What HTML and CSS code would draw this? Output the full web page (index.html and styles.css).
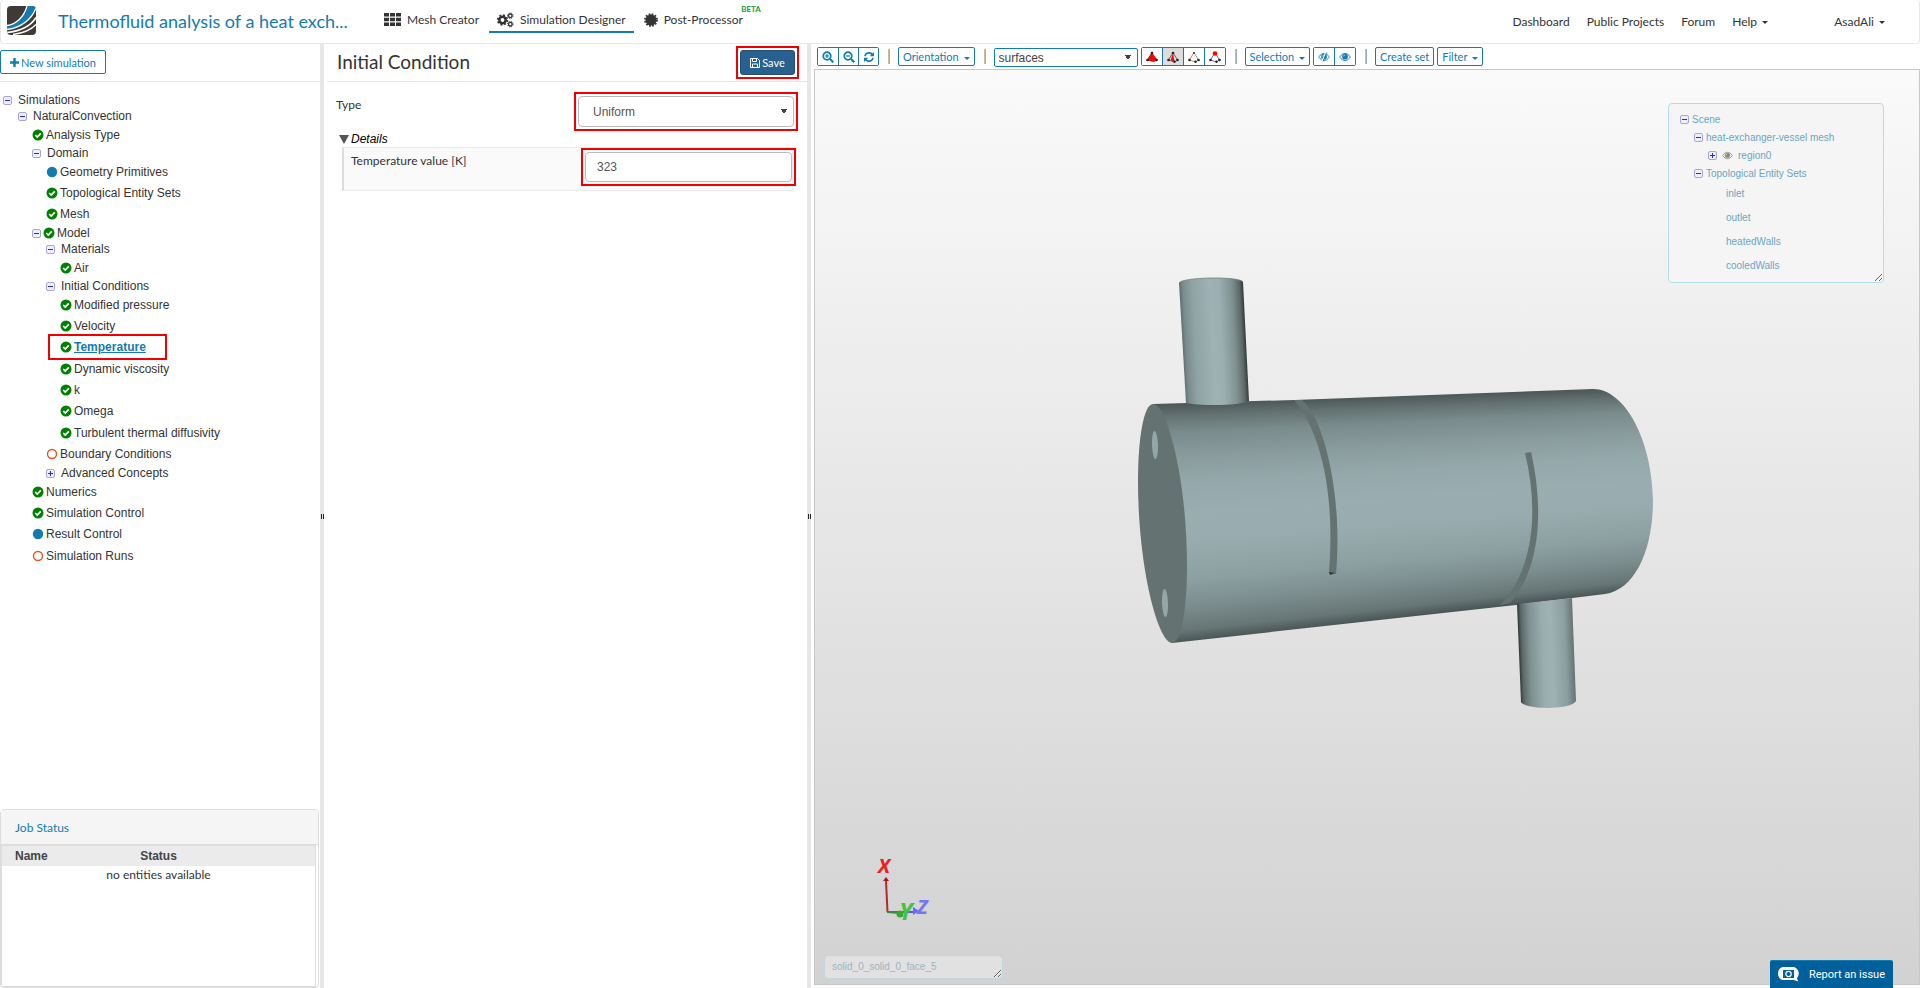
FILE: index.html
```html
<!DOCTYPE html>
<html lang="en">
<head>
    <meta charset="UTF-8">
    <meta name="viewport" content="width=device-width, initial-scale=1.0">
    <title>Simulation Designer</title>
    <link rel="stylesheet" href="styles.css">
</head>
<body>
    <!-- shared icons -->
    <svg class="defs" aria-hidden="true">
        <symbol id="i-ok" viewBox="0 0 12 12">
            <circle cx="6" cy="6" r="5.5" fill="#008000"/>
            <path d="M3.2 6l2 2 3.6-3.6" fill="none" stroke="#fff" stroke-width="1.7"/>
        </symbol>
        <symbol id="i-dot" viewBox="0 0 12 12"><circle cx="6" cy="6" r="5.2" fill="#147bb0"/></symbol>
        <symbol id="i-ring" viewBox="0 0 12 12"><circle cx="6" cy="6" r="4.5" fill="none" stroke="#d9552b" stroke-width="1.4"/></symbol>
        <symbol id="i-minus" viewBox="0 0 9 9">
            <rect x=".5" y=".5" width="8" height="8" rx="1.5" fill="#eef" stroke="#a3a8d8"/>
            <path d="M2 4.5h5" stroke="#2a2ad0"/>
        </symbol>
        <symbol id="i-plusbox" viewBox="0 0 9 9">
            <rect x=".5" y=".5" width="8" height="8" rx="1.5" fill="#eef" stroke="#a3a8d8"/>
            <path d="M2 4.5h5M4.5 2v5" stroke="#2a2ad0"/>
        </symbol>
        <symbol id="i-eye" viewBox="0 0 14 12">
            <path d="M.5 6C3 2.6 5 1.8 7 1.8S11 2.6 13.500 6C11 9.400 9 10.200 7 10.200S3 9.400.5 6z" fill="none" stroke="currentColor" stroke-width="1.1"/>
            <circle cx="7" cy="5.600" r="3.400" fill="currentColor"/>
            <path d="M5.300 5.200a1.700 1.700 0 0 1 1.500-1.500" fill="none" stroke="#fff" stroke-width=".8"/>
        </symbol>
    </svg>

    <header class="topbar">
        <a class="logo" href="#" aria-label="Home">
            <svg viewBox="0 0 29 29" width="29" height="29">
                <clipPath id="lc"><rect width="29" height="29" rx="4"/></clipPath>
                <g clip-path="url(#lc)">
                    <rect width="29" height="29" fill="#403a36"/>
                    <path d="M0 20C9 19 16 12 20 0H29V1C26 14 15 23 0 24z" fill="#147bb0"/>
                    <path d="M0 19.500C9 18.500 17 11 20 0" fill="none" stroke="#fff" stroke-width="1.300"/>
                    <path d="M0 23.500C14 22 25 13 29 2" fill="none" stroke="#fff" stroke-width="1.300"/>
                    <path d="M0 26.500C13 25.500 24 20 29 11.500" fill="none" stroke="#fff" stroke-width="1.600"/>
                    <path d="M6 28.500C17 27 25 23 29 18.500" fill="none" stroke="#fff" stroke-width="1.300"/>
                </g>
            </svg>
        </a>
        <a class="project" href="#">Thermofluid analysis of a heat exch...</a>
        <nav class="modes">
            <a class="mode" href="#">
                <svg viewBox="0 0 17 13" width="17" height="13"><path d="M0 0h5v3.500H0zM6 0h5v3.500H6zM12 0h5v3.500h-5zM0 4.700h5v3.500H0zM6 4.700h5v3.500H6zM12 4.700h5v3.500h-5zM0 9.400h5v3.500H0zM6 9.400h5v3.500H6zM12 9.400h5v3.500h-5z" fill="currentColor"/></svg>
                Mesh Creator
            </a>
            <a class="mode mode-active" href="#">
                <svg viewBox="0 0 17 16" width="17" height="16" fill="none" stroke="currentColor">
                    <circle cx="5.500" cy="8" r="3.200" stroke-width="2.600"/>
                    <circle cx="5.500" cy="8" r="4.900" stroke-width="1.600" stroke-dasharray="1.920 1.930"/>
                    <circle cx="13.300" cy="3.800" r="1.800" stroke-width="1.300"/>
                    <circle cx="13.300" cy="3.800" r="2.800" stroke-width="1" stroke-dasharray="1.100 1.100"/>
                    <circle cx="13.300" cy="12.200" r="1.800" stroke-width="1.300"/>
                    <circle cx="13.300" cy="12.200" r="2.800" stroke-width="1" stroke-dasharray="1.100 1.100"/>
                </svg>
                Simulation Designer
            </a>
            <a class="mode" href="#">
                <svg viewBox="0 0 14 14" width="14" height="14">
                    <circle cx="7" cy="7" r="5.500" fill="currentColor"/>
                    <circle cx="7" cy="7" r="6" fill="none" stroke="currentColor" stroke-width="1.800" stroke-dasharray="1.700 1.440"/>
                </svg>
                Post-Processor
                <span class="beta">BETA</span>
            </a>
        </nav>
        <nav class="links">
            <a href="#">Dashboard</a>
            <a href="#">Public Projects</a>
            <a href="#">Forum</a>
            <a href="#">Help <i class="caret"></i></a>
            <a class="user" href="#">AsadAli <i class="caret"></i></a>
        </nav>
    </header>

    <main class="workspace">
        <aside class="sidebar">
            <div class="sidebar-head">
                <button class="btn new-sim" type="button">
                    <svg viewBox="0 0 9 9" width="9" height="9"><path d="M4.500 0v9M0 4.500h9" stroke="currentColor" stroke-width="2.400"/></svg>
                    New simulation
                </button>
            </div>

            <ul class="tree sim-tree">
                <li><div class="folder"><svg class="tg"><use href="#i-minus"/></svg><span>Simulations</span></div>
                    <ul>
                        <li><div class="folder"><svg class="tg"><use href="#i-minus"/></svg><span>NaturalConvection</span></div>
                            <ul>
                                <li class="leaf"><svg class="st"><use href="#i-ok"/></svg>Analysis Type</li>
                                <li><div class="folder"><svg class="tg"><use href="#i-minus"/></svg><span>Domain</span></div>
                                    <ul>
                                        <li class="leaf"><svg class="st"><use href="#i-dot"/></svg>Geometry Primitives</li>
                                        <li class="leaf"><svg class="st"><use href="#i-ok"/></svg>Topological Entity Sets</li>
                                        <li class="leaf"><svg class="st"><use href="#i-ok"/></svg>Mesh</li>
                                    </ul>
                                </li>
                                <li><div class="folder folder-state"><svg class="tg"><use href="#i-minus"/></svg><svg class="st"><use href="#i-ok"/></svg>Model</div>
                                    <ul>
                                        <li><div class="folder"><svg class="tg"><use href="#i-minus"/></svg><span>Materials</span></div>
                                            <ul>
                                                <li class="leaf"><svg class="st"><use href="#i-ok"/></svg>Air</li>
                                            </ul>
                                        </li>
                                        <li><div class="folder"><svg class="tg"><use href="#i-minus"/></svg><span>Initial Conditions</span></div>
                                            <ul>
                                                <li class="leaf"><svg class="st"><use href="#i-ok"/></svg>Modified pressure</li>
                                                <li class="leaf"><svg class="st"><use href="#i-ok"/></svg>Velocity</li>
                                                <li class="leaf marked"><svg class="st"><use href="#i-ok"/></svg><a class="selected" href="#">Temperature</a></li>
                                                <li class="leaf"><svg class="st"><use href="#i-ok"/></svg>Dynamic viscosity</li>
                                                <li class="leaf"><svg class="st"><use href="#i-ok"/></svg>k</li>
                                                <li class="leaf"><svg class="st"><use href="#i-ok"/></svg>Omega</li>
                                                <li class="leaf"><svg class="st"><use href="#i-ok"/></svg>Turbulent thermal diffusivity</li>
                                            </ul>
                                        </li>
                                        <li class="leaf"><svg class="st"><use href="#i-ring"/></svg>Boundary Conditions</li>
                                        <li><div class="folder"><svg class="tg"><use href="#i-plusbox"/></svg><span>Advanced Concepts</span></div></li>
                                    </ul>
                                </li>
                                <li class="leaf"><svg class="st"><use href="#i-ok"/></svg>Numerics</li>
                                <li class="leaf"><svg class="st"><use href="#i-ok"/></svg>Simulation Control</li>
                                <li class="leaf"><svg class="st"><use href="#i-dot"/></svg>Result Control</li>
                                <li class="leaf"><svg class="st"><use href="#i-ring"/></svg>Simulation Runs</li>
                            </ul>
                        </li>
                    </ul>
                </li>
            </ul>

            <section class="jobs">
                <h2>Job Status</h2>
                <div class="jobs-body">
                    <table>
                        <thead><tr><th>Name</th><th class="mid">Status</th><th></th></tr></thead>
                        <tbody><tr><td colspan="3">no entities available</td></tr></tbody>
                    </table>
                </div>
            </section>
        </aside>

        <div class="splitter"><i></i></div>

        <section class="editor">
            <div class="editor-head">
                <h1>Initial Condition</h1>
                <button class="save" type="button">
                    <svg viewBox="0 0 10 10" width="10" height="10" fill="none" stroke="currentColor"><path d="M.5.5h7l2 2v7h-9zM2.500.5v3h4v-3M2.500 9.500v-3.500h5v3.500"/></svg>
                    Save
                </button>
            </div>
            <div class="row">
                <label for="type">Type</label>
                <div class="field marked">
                    <select id="type"><option>Uniform</option></select>
                </div>
            </div>
            <div class="details"><i class="tri"></i>Details</div>
            <div class="detail-box">
                <label for="temp">Temperature value [K]</label>
                <div class="field-in marked">
                    <input id="temp" type="text" value="323">
                </div>
            </div>
        </section>

        <div class="splitter"><i></i></div>

        <section class="viewer">
            <div class="toolbar">
                <div class="group narrow">
                    <button type="button" aria-label="Zoom in"><svg viewBox="0 0 12 12" width="12" height="12" fill="none" stroke="currentColor"><circle cx="5" cy="5" r="3.800" stroke-width="1.700"/><path d="M3 5h4M5 3v4" stroke-width="1.200"/><path d="M8 8l3.300 3.300" stroke-width="2.200"/></svg></button>
                    <button type="button" aria-label="Zoom out"><svg viewBox="0 0 12 12" width="12" height="12" fill="none" stroke="currentColor"><circle cx="5" cy="5" r="3.800" stroke-width="1.700"/><path d="M3 5h4" stroke-width="1.200"/><path d="M8 8l3.300 3.300" stroke-width="2.200"/></svg></button>
                    <button type="button" aria-label="Refresh"><svg viewBox="0 0 1536 1536" width="10" height="10" fill="currentColor"><path d="M1511 928q0 5-1 7-64 268-268 434.500t-478 166.500q-146 0-282.500-55t-243.500-157l-129 129q-19 19-45 19t-45-19-19-45v-448q0-26 19-45t45-19h448q26 0 45 19t19 45-19 45l-137 137q71 66 161 102t187 36q134 0 250-65t186-179q11-17 53-117 8-23 30-23h192q13 0 22.500 9.500t9.500 22.500zm25-800v448q0 26-19 45t-45 19h-448q-26 0-45-19t-19-45 19-45l138-138q-148-137-349-137-134 0-250 65t-186 179q-11 17-53 117-8 23-30 23h-199q-13 0-22.500-9.500t-9.500-22.500v-7q65-268 270-434.500t480-166.500q146 0 284 55.500t245 156.500l130-129q19-19 45-19t45 19 19 45z"/></svg></button>
                </div>
                <i class="sep"></i>
                <button class="btn" type="button">Orientation <i class="caret"></i></button>
                <i class="sep"></i>
                <select class="pick" aria-label="Render mode"><option>surfaces</option></select>
                <div class="group">
                    <button type="button" aria-label="Pick volumes"><svg viewBox="0 0 12 12" width="12" height="12"><path d="M6 1.500L11.500 9 8 11 1 9.500z" fill="#f00"/><path d="M6 1.500L1 9.500" stroke="#444"/><circle cx="6" cy="2" r="1.300" fill="#222"/><circle cx="1.500" cy="9" r="1.300" fill="#222"/><circle cx="10.500" cy="9" r="1.300" fill="#222"/></svg></button>
                    <button class="on" type="button" aria-label="Pick faces"><svg viewBox="0 0 12 12" width="12" height="12"><path d="M6 1.500L7.500 11 3.500 9.500z" fill="#f00"/><path d="M6 1.500L1.500 9 7.500 11 10.500 9z" fill="none" stroke="#666"/><circle cx="6" cy="2" r="1.300" fill="#222"/><circle cx="1.500" cy="9" r="1.300" fill="#222"/><circle cx="7.500" cy="10.700" r="1.200" fill="#222"/><circle cx="10.500" cy="9" r="1.300" fill="#222"/></svg></button>
                    <button type="button" aria-label="Pick edges"><svg viewBox="0 0 12 12" width="12" height="12"><path d="M6 1.500L10.500 9 7.500 11 1.500 9" fill="none" stroke="#999"/><path d="M6 1.500L1.500 9" stroke="#f66"/><circle cx="6" cy="2" r="1.100" fill="#444"/><circle cx="1.500" cy="9" r="1.300" fill="#222"/><circle cx="7.500" cy="10.700" r="1.200" fill="#222"/><circle cx="10.500" cy="9" r="1.300" fill="#222"/></svg></button>
                    <button type="button" aria-label="Pick nodes"><svg viewBox="0 0 12 12" width="12" height="12"><path d="M6 1.500L10.500 9 7.500 11 1.500 9z" fill="none" stroke="#777"/><circle cx="6" cy="2.500" r="2.300" fill="#f00"/><circle cx="1.500" cy="9" r="1.300" fill="#222"/><circle cx="7.500" cy="10.700" r="1.200" fill="#222"/><circle cx="10.500" cy="9" r="1.300" fill="#222"/></svg></button>
                </div>
                <i class="sep"></i>
                <button class="btn" type="button">Selection <i class="caret"></i></button>
                <div class="group">
                    <button type="button" aria-label="Hide"><svg viewBox="0 0 14 12" width="12" height="10"><use href="#i-eye"/><path d="M4.500 11.500L9 .5" stroke="#fff" stroke-width="1.500"/><path d="M5.800 11.500L10.300.5" stroke="currentColor" stroke-width="1.100"/></svg></button>
                    <button type="button" aria-label="Show"><svg width="12" height="10"><use href="#i-eye"/></svg></button>
                </div>
                <i class="sep"></i>
                <button class="btn" type="button">Create set</button>
                <button class="btn" type="button">Filter <i class="caret"></i></button>
            </div>

            <div class="canvas">
                <div class="model">
                    <div class="shell"></div>
                    <svg viewBox="0 0 560 460" width="560" height="460">
                        <defs>
                            <linearGradient id="p1" gradientUnits="userSpaceOnUse" x1="62" y1="83" x2="126" y2="79.600">
                                <stop offset="0" stop-color="#5d6b6b"/>
                                <stop offset=".06" stop-color="#7a8b8c"/>
                                <stop offset=".2" stop-color="#8fa2a4"/>
                                <stop offset=".48" stop-color="#9eb1b4"/>
                                <stop offset=".62" stop-color="#9bafb2"/>
                                <stop offset=".82" stop-color="#7f9091"/>
                                <stop offset=".94" stop-color="#5b6868"/>
                                <stop offset="1" stop-color="#2f3838"/>
                            </linearGradient>
                            <linearGradient id="p2" gradientUnits="userSpaceOnUse" x1="399" y1="393" x2="454" y2="391">
                                <stop offset="0" stop-color="#2f3838"/>
                                <stop offset=".06" stop-color="#5b6868"/>
                                <stop offset=".2" stop-color="#7f9091"/>
                                <stop offset=".45" stop-color="#9aaeb1"/>
                                <stop offset=".6" stop-color="#9eb1b4"/>
                                <stop offset=".85" stop-color="#8b9d9f"/>
                                <stop offset="1" stop-color="#657474"/>
                            </linearGradient>
                        </defs>
                        <path d="M33 144C47 144 67 219 67 306 67 350 61 383 52 383 38 383 18 308 18 221 18 177 24 144 33 144z" fill="#647271"/>
                        <ellipse cx="35" cy="185" rx="3" ry="14" fill="#93a6a8" transform="rotate(-2 35 185)"/>
                        <ellipse cx="45" cy="343" rx="3" ry="14" fill="#93a6a8" transform="rotate(-2 45 343)"/>
                        <path d="M174 140h8C204 158 223 236 216 314L209 313C214 250 207 180 174 140z" fill="#647271"/>
                        <path d="M209 312l6 1-5 2z" fill="#2d3535"/>
                        <path d="M405 193l6-1C422 240 424 305 390 343L380 345C414 310 419 250 405 193z" fill="#647271"/>
                        <path d="M59 23C62 17 120 16 123 22L129 141C120 146 80 146 66 143z" fill="url(#p1)"/>
                        <path d="M59 23C62 17 120 16 123 22" fill="none" stroke="#71807f" stroke-width=".8"/>
                        <path d="M397 344L452 338 456 441C452 450 405 450 401 442z" fill="url(#p2)"/>
                    </svg>
                </div>

                <div class="scene">
                    <ul class="tree">
                        <li><div class="folder"><svg class="tg"><use href="#i-minus"/></svg>Scene</div>
                            <ul>
                                <li><div class="folder"><svg class="tg"><use href="#i-minus"/></svg>heat-exchanger-vessel mesh</div>
                                    <ul>
                                        <li><div class="folder"><svg class="tg"><use href="#i-plusbox"/></svg><svg class="vis"><use href="#i-eye"/></svg>region0</div></li>
                                    </ul>
                                </li>
                                <li><div class="folder"><svg class="tg"><use href="#i-minus"/></svg>Topological Entity Sets</div>
                                    <ul class="sets">
                                        <li>inlet</li>
                                        <li>outlet</li>
                                        <li>heatedWalls</li>
                                        <li>cooledWalls</li>
                                    </ul>
                                </li>
                            </ul>
                        </li>
                    </ul>
                </div>

                <svg class="axes" viewBox="0 -16 80 96" width="80" height="96">
                    <path d="M15 55H42" stroke="#5c5cc8" stroke-width="2"/>
                    <path d="M41 50l6 4-6 4z" fill="#6a6af0"/>
                    <path d="M15.500 55L14 24" stroke="#b02a2a" stroke-width="2"/>
                    <path d="M11 24l3-4 3 4z" fill="#b01818"/>
                    <path d="M15 55l13 1" stroke="#3a8a3a" stroke-width="2"/>
                    <circle cx="28" cy="57" r="3.500" fill="#37a837"/>
                    <text class="ax" x="6" y="16" fill="#e8211d">X</text>
                    <text class="ax" x="45" y="57" fill="#7474f4">Z</text>
                    <text class="ax ax-near" x="27" y="63" fill="#44c244">Y</text>
                </svg>

                <textarea class="picked" aria-label="Picked entity" readonly>solid_0_solid_0_face_5</textarea>
            </div>
        </section>
    </main>

    <button class="report" type="button">
        <svg viewBox="0 0 21 15" width="21" height="15">
            <path d="M5 0h10a6 6.500 0 0 1 4 11l1 3.500-4-1.500H5A5 6.500 0 0 1 5 0z" fill="#fff"/>
            <rect x="5" y="3" width="11" height="8" fill="#00609c"/>
            <circle cx="10.500" cy="7" r="2.700" fill="none" stroke="#fff" stroke-width="1.200"/>
        </svg>
        Report an issue
    </button>
</body>
</html>
```
FILE: styles.css
```css
*, *::after {
    box-sizing: border-box;
}
body {
    margin: 0;
    height: 100vh;
    display: flex;
    flex-direction: column;
    overflow: hidden;
    font-family: Lato, sans-serif;
    font-size: 12px;
    color: #333;
    background-color: #fff;
}
a {
    color: inherit;
    text-decoration: none;
}
ul {
    list-style: none;
    margin: 0;
    padding: 0;
}
button, select, input, textarea {
    font-family: inherit;
    font-size: inherit;
    margin: 0;
}
button {
    cursor: pointer;
}
.defs {
    position: absolute;
    width: 0;
    height: 0;
}
.caret {
    display: inline-block;
    margin-left: 2px;
    vertical-align: middle;
    border-top: 3px solid;
    border-left: 3px solid transparent;
    border-right: 3px solid transparent;
}

/* top bar */
.topbar {
    flex: none;
    height: 44px;
    display: flex;
    align-items: center;
    padding: 0 34px 2px 7px;
    border: 1px solid #e7e7e7;
    border-top: 0;
    border-radius: 4px;
}
.logo {
    height: 29px;
    margin-left: -1px;
}
.project {
    width: 318px;
    margin-left: 22px;
    font-size: 18px;
    color: #147bb0;
}
.modes {
    display: flex;
    gap: 2px;
}
.mode {
    position: relative;
    display: flex;
    align-items: center;
    gap: 6px;
    height: 25px;
    padding: 0 8px;
    border-bottom: 2px solid transparent;
}
.mode-active {
    border-bottom-color: #147bb0;
}
.beta {
    position: absolute;
    top: -4px;
    right: -10px;
    font-size: 8px;
    font-weight: bold;
    color: #1d9a2c;
}
.links {
    display: flex;
    gap: 17px;
    margin-left: auto;
    padding-top: 2px;
}
.links .user {
    margin-left: 49px;
}

.workspace {
    flex: 1;
    min-height: 0;
    display: flex;
}
.splitter {
    flex: none;
    width: 4px;
    display: flex;
    align-items: center;
    background-color: #e6e6e6;
}
.splitter i {
    width: 3px;
    height: 5px;
    margin-left: 1px;
    border-left: 1px solid #222;
    border-right: 1px solid #222;
}

/* simulation tree */
.sidebar {
    flex: none;
    width: 320px;
    display: flex;
    flex-direction: column;
}
.sidebar-head {
    height: 38px;
    padding-top: 6px;
    border-bottom: 1px solid #e6e6e6;
}
.btn {
    height: 19px;
    padding: 0 4px;
    border: 1px solid #147bb0;
    border-radius: 2px;
    font-size: 11px;
    color: #147bb0;
    background-color: #fff;
    white-space: nowrap;
}
.new-sim {
    display: flex;
    align-items: center;
    gap: 2px;
    height: 24px;
    padding: 0 9px;
}
.tree {
    font-family: "Liberation Sans", Arial, sans-serif;
}
.tree ul {
    padding-left: 15px;
}
.tree ul ul {
    padding-left: 14px;
}
.tree .folder {
    display: flex;
    align-items: center;
    height: 16px;
}
.tg {
    flex: none;
    width: 9px;
    height: 9px;
    margin-right: 6px;
}
.st {
    flex: none;
    width: 12px;
    height: 12px;
    margin-right: 2px;
}
.sim-tree {
    flex: 1;
    padding: 10px 0 0 3px;
}
.folder-state .tg {
    margin-right: 2px;
}
.leaf {
    display: flex;
    align-items: center;
    height: 21px;
}
.leaf:nth-child(3n) {
    height: 22px;
}
.selected {
    font-weight: bold;
    color: #147bb0;
    text-decoration: underline;
}

/* red call-out frames */
.marked {
    position: relative;
}
.marked::after {
    content: "";
    position: absolute;
    inset: -4px;
    border: 2px solid #f00000;
    pointer-events: none;
}
.leaf.marked::after {
    inset: -2px auto -2px -12px;
    width: 119px;
}

/* job list */
.jobs {
    display: flex;
    flex-direction: column;
    height: 179px;
    margin-right: 1px;
    border: 1px solid #ddd;
    border-radius: 4px;
}
.jobs h2 {
    margin: 0;
    padding: 2px 14px 0;
    font-size: 12px;
    font-weight: normal;
    line-height: 32px;
    color: #147bb0;
    background-color: #f5f5f5;
    border-bottom: 1px solid #ddd;
}
.jobs-body {
    flex: 1;
    margin-right: 2px;
    border: 1px solid #ddd;
}
.jobs table {
    width: 100%;
    table-layout: fixed;
    border-collapse: collapse;
}
.jobs th {
    height: 20px;
    padding: 0 13px;
    font-family: "Liberation Sans", Arial, sans-serif;
    color: #444;
    text-align: left;
    background-color: #ebebeb;
}
.jobs th.mid, .jobs td {
    padding: 0;
    text-align: center;
}
.jobs td {
    height: 17px;
}

/* settings panel */
.editor {
    flex: none;
    width: 483px;
    padding: 0 0 0 3px;
}
.editor-head {
    display: flex;
    align-items: center;
    justify-content: space-between;
    height: 38px;
    padding: 0 12px 0 10px;
    border-bottom: 1px solid #e6e6e6;
}
.editor h1 {
    margin: 0;
    padding-bottom: 2px;
    font-size: 19px;
    font-weight: normal;
}
.save {
    position: relative;
    display: flex;
    align-items: center;
    justify-content: center;
    gap: 2px;
    width: 55px;
    height: 25px;
    padding: 0;
    border: 1px solid #204d74;
    border-radius: 3px;
    font-size: 11px;
    color: #fff;
    background-color: #286090;
}
.save::after {
    content: "";
    position: absolute;
    inset: -5px;
    border: 2px solid #f00000;
}
.row {
    display: flex;
    justify-content: space-between;
    padding: 14px 13px 0 9px;
}
.field {
    width: 216px;
    height: 31px;
}
.field select, .field-in input {
    width: 100%;
    height: 100%;
    padding: 0 14px;
    border: 1px solid #bbb;
    border-radius: 4px;
    font-family: "Liberation Sans", Arial, sans-serif;
    color: #555;
    background-color: #fff;
}
.field select, .pick {
    appearance: none;
    background: linear-gradient(to bottom right, #444 50%, transparent 51%) right 6px center / 3px 5px no-repeat,
        linear-gradient(to bottom left, #444 50%, transparent 51%) right 9px center / 3px 5px no-repeat #fff;
}
.row label {
    padding-top: 1px;
}
.details {
    display: flex;
    align-items: center;
    gap: 2px;
    padding: 4px 12px 0;
    height: 20px;
    font-family: "Liberation Sans", Arial, sans-serif;
    font-style: italic;
    color: #000;
}
.tri {
    border-top: 9px solid #555;
    border-left: 5px solid transparent;
    border-right: 5px solid transparent;
}
.detail-box {
    display: flex;
    justify-content: space-between;
    height: 44px;
    margin: 0 14px 0 15px;
    padding: 4px 0 0 7px;
    border: 1px solid #ebebeb;
    border-left: 2px solid #ddd;
    background-color: #fafafa;
}
.detail-box label {
    padding-top: 1px;
}
.field-in {
    width: 207px;
    height: 30px;
}
.field-in input {
    padding: 0 11px;
}

/* 3D viewer */
.viewer {
    flex: 1;
    min-width: 0;
    display: flex;
    flex-direction: column;
    padding: 3px 0 3px 3px;
}
.toolbar {
    display: flex;
    align-items: flex-start;
    height: 22px;
    padding-left: 3px;
    white-space: nowrap;
}
.toolbar > * {
    flex: none;
    margin-right: 3px;
}
.group {
    display: flex;
    height: 19px;
    border: 1px solid #147bb0;
    border-radius: 2px;
}
.group button {
    display: flex;
    align-items: center;
    justify-content: center;
    width: 20px;
    padding: 0;
    border: 0;
    color: #147bb0;
    background-color: #fff;
}
.group button + button {
    width: 21px;
    border-left: 1px solid #147bb0;
}
.narrow button, .narrow button + button {
    width: 20px;
}
.group .on {
    background-color: #ddd;
}
.toolbar .sep {
    width: 2px;
    height: 15px;
    margin: 2px 8px 0 6px;
    border-left: 1px solid #d9b79c;
    border-right: 1px solid #a0a8cc;
}
.pick {
    width: 144px;
    height: 19px;
    margin-top: 1px;
    padding: 0 4px;
    border: 1px solid #147bb0;
    border-radius: 2px;
    font-family: "Liberation Sans", Arial, sans-serif;
    color: #444;
}
.canvas {
    position: relative;
    flex: 1;
    overflow: hidden;
    border: 1px solid #c8c8c8;
    background: linear-gradient(#fafafa, #d2d2d2);
}
.model {
    position: absolute;
    left: 305px;
    top: 190px;
    width: 560px;
    height: 460px;
}
.model svg {
    position: absolute;
    left: 0;
    top: 0;
}
/* shading runs towards the vanishing point on the right */
.shell {
    width: 560px;
    height: 460px;
    clip-path: path("M33 144L174 140L473 129C505 129 532 180 533 240C533 290 515 330 485 334L396 345L214 365L52 383Z");
    background: conic-gradient(from 263.5deg at 3082px 40px,
        #465151 0deg, #677575 0.25deg, #7c8d8e 0.7deg, #8c9fa1 1.2deg,
        #98abae 1.9deg, #9aadb1 2.4deg, #95a8ab 3deg, #8a9c9e 3.5deg,
        #7a8b8c 4deg, #647271 4.3deg, #465151 4.6deg);
}
.scene {
    position: absolute;
    top: 33px;
    right: 35px;
    width: 216px;
    height: 180px;
    padding: 6px 11px;
    border: 1px solid #b0dfe9;
    border-radius: 4px;
    font-size: 10px;
    color: #6aa5c4;
    background-color: #f5f5f5;
    resize: both;
    overflow: hidden;
}
.scene .folder {
    height: 18px;
}
.scene .tree ul {
    padding-left: 14px;
}
.scene .tg {
    margin-right: 3px;
}
.scene .vis {
    width: 11px;
    height: 9px;
    margin: 0 5px 0 2px;
    color: #8a8a7e;
}
.scene .tree .sets {
    padding-left: 32px;
    line-height: 24px;
}
.axes {
    position: absolute;
    left: 57px;
    bottom: 47px;
}
.ax {
    font-family: "Open Sans", sans-serif;
    font-size: 20px;
    font-weight: bold;
    font-style: italic;
}
.ax-near {
    font-size: 24px;
}
.picked {
    position: absolute;
    left: 9px;
    bottom: 5px;
    width: 179px;
    height: 24px;
    padding: 5px 7px;
    border: 1px solid #c3d6dc;
    border-radius: 4px;
    font-family: "Liberation Sans", Arial, sans-serif;
    font-size: 10px;
    color: #9db4be;
    background-color: #e1e1e1;
    overflow: hidden;
}
.report {
    position: fixed;
    right: 27px;
    bottom: 0;
    display: flex;
    align-items: center;
    gap: 10px;
    height: 28px;
    padding: 0 8px;
    border: 0;
    border-top: 1px solid #147bb0;
    border-radius: 2px 2px 0 0;
    font-family: Roboto, sans-serif;
    font-size: 11px;
    color: #fff;
    background-color: #00609c;
    white-space: nowrap;
}
```
